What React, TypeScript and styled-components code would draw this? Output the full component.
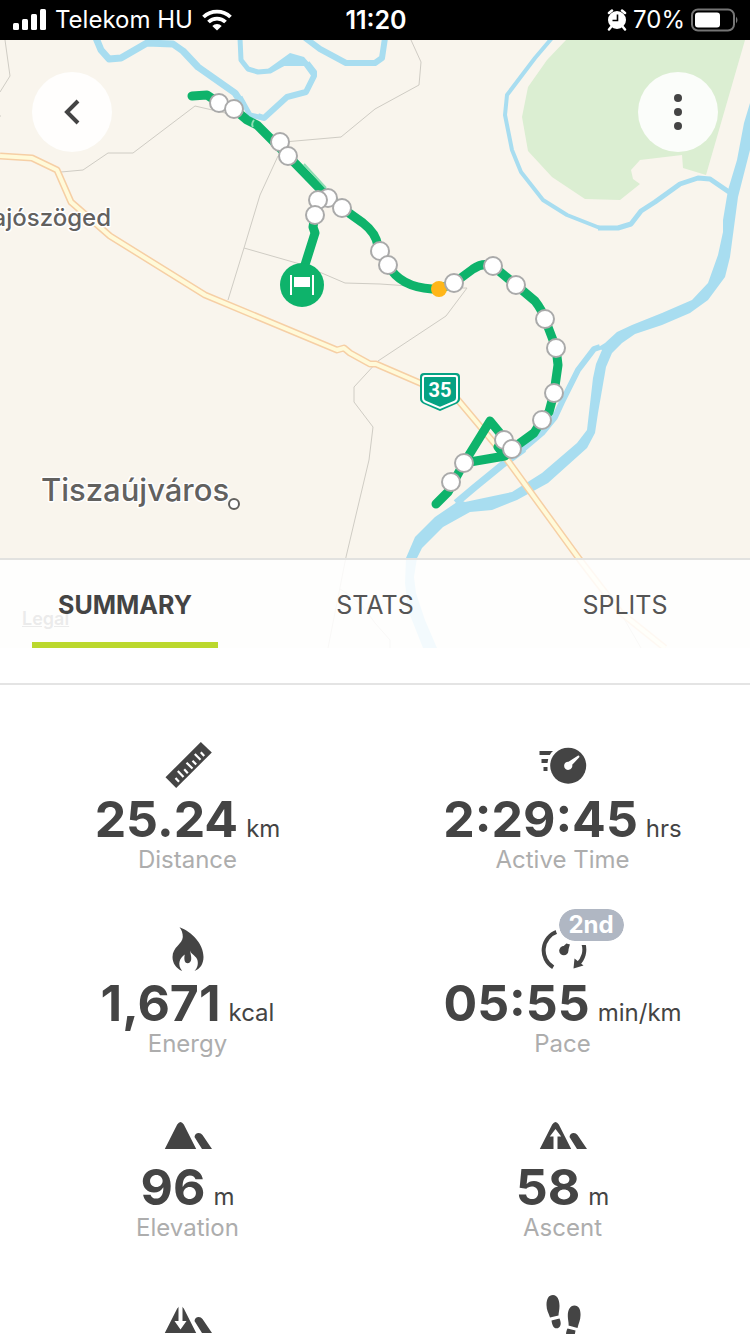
import React from "react";
import styled, { createGlobalStyle } from "styled-components";

const INK = "#444444";
const FONT = 'Inter, "Liberation Sans", sans-serif';

const GlobalStyle = createGlobalStyle`
  * { box-sizing: border-box; }
  body { margin: 0; background: #ffffff; color: ${INK}; font-family: ${FONT}; }
  button { font: inherit; color: inherit; border: 0; background: none; padding: 0; cursor: pointer; }
`;

const Screen = styled.div`
  display: flex;
  flex-direction: column;
  height: 100vh;
  overflow: hidden;
`;

const StatusBar = styled.header`
  flex: none;
  display: grid;
  grid-template-columns: 1fr auto 1fr;
  align-items: center;
  height: 40px;
  padding: 0 11px 0 13px;
  background: #000000;
  color: #ffffff;
  font-size: 24px;
  line-height: 40px;
`;

const StatusGroup = styled.div<{ $end?: boolean; $gap: number }>`
  display: flex;
  align-items: center;
  justify-content: ${(p) => (p.$end ? "flex-end" : "flex-start")};
  gap: ${(p) => p.$gap}px;
`;

const Clock = styled.time`
  font-size: 25px;
  font-weight: 600;
`;

const StatusIcon = styled.svg`
  display: block;
  flex: none;
`;

const MapPanel = styled.section`
  position: relative;
  flex: none;
  height: 608px;
  background: #f9f5ed;
`;

const MapCanvas = styled.svg`
  display: block;
  width: 100%;
  height: 100%;
`;

const RoundButton = styled.button<{ $side: "left" | "right" }>`
  position: absolute;
  top: 32px;
  ${(p) => p.$side}: 32px;
  display: grid;
  place-items: center;
  width: 80px;
  height: 80px;
  border-radius: 50%;
  background: rgba(255, 255, 255, 0.88);
`;

const LegalLink = styled.a`
  position: absolute;
  left: 22px;
  bottom: 18px;
  color: #6f6f6f;
  font-size: 18px;
  font-weight: 600;
  line-height: 22px;
`;

const TabBar = styled.nav`
  position: absolute;
  left: 0;
  right: 0;
  bottom: 0;
  display: grid;
  grid-template-columns: repeat(3, 1fr);
  height: 90px;
  border-top: 2px solid #e2e2e0;
  background: rgba(255, 255, 255, 0.86);
`;

const Tab = styled.button<{ $active?: boolean }>`
  margin: 0 32px;
  padding-top: 8px;
  border-bottom: 6px solid ${(p) => (p.$active ? "#bbd82d" : "transparent")};
  color: ${(p) => (p.$active ? INK : "#555555")};
  font-size: 25px;
  font-weight: ${(p) => (p.$active ? 700 : 400)};
  line-height: 28px;
`;

const Stats = styled.main`
  display: grid;
  grid-template-columns: 1fr 1fr;
  row-gap: 54px;
  margin-top: 35px;
  padding-top: 57px;
  border-top: 2px solid #e4e4e4;
`;

const Stat = styled.article`
  display: flex;
  flex-direction: column;
  align-items: center;
`;

const IconBox = styled.div`
  position: relative;
  width: 48px;
  height: 48px;
`;

const Glyph = styled.svg`
  display: block;
  width: 48px;
  height: 48px;
  fill: ${INK};
`;

const Badge = styled.span`
  position: absolute;
  top: -21px;
  left: 16px;
  padding: 0 10px;
  border: 4px solid #ffffff;
  border-radius: 20px;
  background: #b0b7c3;
  background-clip: padding-box;
  color: #ffffff;
  font-size: 24px;
  font-weight: 700;
  line-height: 32px;
`;

const Reading = styled.div`
  display: flex;
  align-items: baseline;
  gap: 8px;
`;

const Value = styled.strong`
  font-size: 50px;
  font-weight: 700;
  line-height: 58px;
`;

const Unit = styled.span`
  font-size: 24px;
  line-height: 24px;
`;

const Label = styled.div`
  color: #adadad;
  font-size: 24px;
  line-height: 24px;
`;

const minorRoads = [
  "M5 40L10 76L0 92",
  "M0 116h1",
  "M61 172L83 170L108 153H133L195 106L234 115",
  "M284 142L341 137L375 109L419 85L421 62L411 40",
  "M278 156L260 195L244 248L228 300",
  "M244 248L300 264L324 274L345 283L380 284L439 288L467 288L446 316L378 361L354 387V402L373 427L369 460L346 557L328 648",
  "M340 589Q360 600 375 623L390 640V648",
  "M623 617L641 648",
];

const highway =
  "M0 156L32 158L57 170L71 202L110 236L205 295L337 350L344 348L350 353L370 364L376 364L420 383L458 400L500 450L580 560L620 612L665 648";

const track = [
  "M192 96L207 95L219 103L234 109L247 120L257 125L280 148L288 156L325 194L342 208L363 223Q376 233 378 246L388 265Q400 287 432 289L439 289L454 283L473 269Q483 262 493 266L516 285L535 301Q542 310 545 319L556 348L558 365L554 393L549 412L542 420L534 433L512 449",
  "M328 198L318 200L315 215L313 227L315 233L304 268",
  "M436 504L448 492L464 463L490 421L504 438L498 447L505 456L464 463",
];

const waypoints: [number, number][] = [
  [219, 103], [234, 109], [280, 142], [288, 156], [328, 198], [318, 200], [315, 215],
  [342, 208], [380, 251], [388, 265], [454, 283], [493, 266], [516, 285], [545, 319],
  [556, 348], [554, 393], [542, 420], [504, 440], [512, 449], [464, 463], [451, 482],
];

function RouteMap() {
  return (
    <MapCanvas viewBox="0 40 750 608" preserveAspectRatio="xMidYMid slice" role="img" aria-label="Route map">
      <path
        fill="#dbeed2"
        d="M566 40L547 60L528 87L522 117L528 151L552 177L585 199L620 200L640 184L633 179L631 170L640 160L682 155L683 168L706 175L745 40Z"
      />
      <g fill="none" stroke="#a8ddf0" strokeLinejoin="round">
        <path strokeWidth="7" d="M96 38L101 50L109 59L121 58L147 43L173 44L183 51L198 67L235 93L243 105" />
        <path strokeWidth="5" d="M240 97L250 115L263 118" />
        <path strokeWidth="6" d="M258 116L264 118L287 97L306 92L314 76V72L307 63" />
        <path strokeWidth="5" d="M240 38L241 60L248 69L258 72L270 71L286 62" />
        <path strokeWidth="6" d="M304 37L320 49L346 63L375 63L382 58L385 38" />
        <path strokeWidth="4" d="M552 38L535 58L507 95L505 115L512 150L521 172L543 200L567 215L600 228L618 228" />
        <path strokeWidth="5" d="M598 228L618 228L631 224L641 211L655 202L680 184L698 178L710 179L729 192" />
        <path strokeWidth="6" d="M600 347L594 349L578 370L562 402L555 417L542 433L522 450" />
        <path strokeWidth="7" d="M524 449L502 465L475 487L456 503" />
      </g>
      <path
        fill="#a8ddf0"
        d="M265 71L290 53L304 57L317 72L312 77L304 66L284 66ZM750 103L744 123L737 160L728 190L723 220V232L718 255L708 283L692 300L662 313L632 325L617 332L605 343L597 348L602 350L596 364L593 378L587 430L577 443L542 473L512 492L465 502L460 500L435 517L415 537L406 558L405 583L408 610L423 648H437L425 620L416 593L414 577L417 558L422 548L443 527L470 512L492 510L517 500L548 483L587 448L595 433L598 413L606 367L612 353L622 343L635 334L662 325L690 313L708 300L725 277L730 257L738 197L750 150Z"
      />
      <g fill="none" stroke="#cfccc4" strokeWidth="1">
        {minorRoads.map((d) => (
          <path key={d} d={d} />
        ))}
      </g>
      <g fill="none" strokeLinejoin="round">
        <path d={highway} stroke="#f6cfa5" strokeWidth="7" />
        <path d={highway} stroke="#fffad9" strokeWidth="4" />
      </g>
      <g fill="none" stroke="#0eb36b" strokeWidth="9" strokeLinecap="round" strokeLinejoin="round">
        {track.map((d) => (
          <path key={d} d={d} />
        ))}
      </g>
      <path d="M253 127Q251 124 254 120M304 164L326 188" fill="none" stroke="#8fdcb4" strokeWidth="2" />
      <circle cx="439" cy="289" r="8" fill="#ffb619" />
      <g fill="#ffffff" stroke="#aaaaaa" strokeWidth="2">
        {waypoints.map(([x, y]) => (
          <circle key={`${x}-${y}`} cx={x} cy={y} r="9" />
        ))}
      </g>
      <circle cx="302" cy="285" r="22" fill="#0eb36b" />
      <path fill="#ffffff" d="M290 275h2v20h-2ZM312 275h2v20h-2ZM294 277h16v10h-16Z" />
      <path
        fill="#05a283"
        d="M424 373H456Q460 373 460 377V399Q460 402 456 404L440 411L424 404Q420 402 420 399V377Q420 373 424 373Z"
      />
      <path
        fill="none"
        stroke="#ffffff"
        strokeWidth="2"
        d="M425 376H455Q457 376 457 378V398Q457 401 454 402L440 408L426 402Q423 401 423 398V378Q423 376 425 376Z"
      />
      <text x="440" y="397" textAnchor="middle" fill="#ffffff" fontFamily="Roboto, sans-serif" fontSize="20" fontWeight="700">
        35
      </text>
      <g
        fill="#62615f"
        stroke="#ffffff"
        strokeWidth="3"
        strokeLinejoin="round"
        paintOrder="stroke"
        fontFamily={FONT}
        fontWeight="500"
      >
        <text x="111" y="226" textAnchor="end" fontSize="24">ajószöged</text>
        <text x="41" y="501" fontSize="31">Tiszaújváros</text>
      </g>
      <circle cx="234" cy="504" r="5" fill="#ffffff" stroke="#62615f" strokeWidth="2" />
    </MapCanvas>
  );
}

const smallPeak = "M30.5 27Q31 23 34.8 23Q37 23 38.5 25L48 39H38Z";
const bigPeak = "M.8 39L13.2 14.5Q16.5 9.500 19.800 14.5L32.2 39Z";

const icons: Record<string, React.ReactNode> = {
  ruler: (
    <>
      <path d="M36.800 0L47.800 10.500L12.200 46L1.500 35.300Z" />
      <path
        fill="none"
        stroke="#ffffff"
        strokeWidth="2.200"
        d="M11.500 36L15 39.700M13.800 29L19.500 35M20.200 27.300L23.800 31.200M22.500 20.700L28.500 26.500M28.500 18.700L32.200 22.500M30.800 12L36.500 17.800M36.800 10.300L40.200 14"
      />
    </>
  ),
  speed: (
    <>
      <path d="M.5 9H14Q12 10.500 10.800 13H.5ZM2.500 17H9.200L8.500 21H2.500ZM4.500 25H8.500V29H4.500Z" />
      <circle cx="29.200" cy="23.700" r="18" />
      <path
        fill="#ffffff"
        d="M39.200 13.500Q40.800 13.500 40.300 15.300L33.200 22.800A4.100 4.100 0 1 1 29.500 19.700Z"
      />
    </>
  ),
  flame: (
    <path d="M15.500 1.300C28 6 39.500 18 39.500 31C39.500 38 36 43 30.500 45C33.500 42 34.800 37 33 33C31 29 26 28 25.800 23.300C26 27 30 36 24 37.300C20 37.500 20 32 20.800 28.500C15.500 32 13 38.500 18.200 45C12 42.500 8.500 37 8.500 31C8.500 21 18.500 18 18.800 11C18.900 7 17.500 4 15.500 1.300Z" />
  ),
  pace: (
    <>
      <path
        fill="none"
        stroke={INK}
        strokeWidth="4"
        d="M18.200 5.700A19.700 19.700 0 0 0 14.200 41.300M44.200 17A19.700 19.700 0 0 1 38.500 38.500"
      />
      <path d="M35.500 32.500L34.500 42.500L44.500 39.500Z" />
      <circle cx="24.800" cy="24.700" r="4.600" />
      <path d="M23 21.500L28 17L31 18L28.500 27Z" />
    </>
  ),
  elevation: <path d={bigPeak + smallPeak} />,
  ascent: (
    <>
      <path d={bigPeak + smallPeak} />
      <path fill="#ffffff" d="M16.500 19L22.200 26.500H18.500V39H14.500V26.500H10.800Z" />
    </>
  ),
  descent: (
    <>
      <path d={bigPeak + smallPeak} />
      <path fill="#ffffff" d="M16.500 35.500L22.500 27H18.500V11H14.500V27H10.500Z" />
    </>
  ),
  steps: (
    <path d="M14 1C18.500 1 20.500 6 20.500 12C20.500 16 19.500 19 19.500 21.500L11 23.500C9.500 19 7.500 16 7.500 11C7.500 5 9.500 1 14 1ZM12.500 26.500L20.500 24.500C21.500 27 22 29 21.500 31C20.500 35 15.500 35.500 14 32C13 30 12.800 28.500 12.500 26.500ZM35.500 11.500C40 11.500 41.800 16 41.500 21.500C41.500 26 39.500 29.500 38.500 34L29.500 31.500C30 29 28.800 26 28.800 22C28.800 16 31 11.500 35.500 11.500ZM28.500 34.500L36.500 36.500C36 41 34.500 45 31 44.500C26 44 26.500 38.500 28.500 34.500Z" />
  ),
};

interface StatData {
  icon: string;
  value?: string;
  unit?: string;
  label?: string;
  badge?: string;
}

const stats: StatData[] = [
  { icon: "ruler", value: "25.24", unit: "km", label: "Distance" },
  { icon: "speed", value: "2:29:45", unit: "hrs", label: "Active Time" },
  { icon: "flame", value: "1,671", unit: "kcal", label: "Energy" },
  { icon: "pace", value: "05:55", unit: "min/km", label: "Pace", badge: "2nd" },
  { icon: "elevation", value: "96", unit: "m", label: "Elevation" },
  { icon: "ascent", value: "58", unit: "m", label: "Ascent" },
  { icon: "descent" },
  { icon: "steps" },
];

export default function App() {
  return (
    <Screen>
      <GlobalStyle />
      <StatusBar>
        <StatusGroup $gap={9}>
          <StatusIcon width="33" height="22" viewBox="0 0 33 22" fill="#ffffff">
            <rect x="0" y="14" width="6" height="7" rx="1.500" />
            <rect x="9" y="10" width="6" height="11" rx="1.500" />
            <rect x="18" y="5" width="6" height="16" rx="1.500" />
            <rect x="27" y="0" width="6" height="21" rx="1.500" />
          </StatusIcon>
          <span>Telekom HU</span>
          <StatusIcon width="30" height="22" viewBox="0 0 30 22" fill="none" stroke="#ffffff" strokeWidth="3.800">
            <path d="M1.500 8A19.500 19.500 0 0 1 28.500 8" />
            <path d="M6.500 13A12.200 12.200 0 0 1 23.500 13" />
            <path d="M15 21.500L10.300 17A6.800 6.800 0 0 1 19.700 17Z" fill="#ffffff" stroke="none" />
          </StatusIcon>
        </StatusGroup>
        <Clock>11:20</Clock>
        <StatusGroup $end $gap={6}>
          <StatusIcon width="20" height="22" viewBox="0 0 20 22">
            <path d="M2 4L5 1.500M15 1.500L18 4M4 18L2 20.500M16 18L18 20.500" stroke="#ffffff" strokeWidth="2.500" strokeLinecap="round" />
            <circle cx="10" cy="11" r="9" fill="#ffffff" />
            <path d="M10.500 5.500V11.500H5.500" fill="none" stroke="#000000" strokeWidth="1.600" />
          </StatusIcon>
          <span>70%</span>
          <StatusIcon width="48" height="24" viewBox="0 0 48 24">
            <rect x="1" y="1.500" width="42" height="21" rx="6" fill="none" stroke="#757575" strokeWidth="2" />
            <rect x="4" y="4.500" width="25" height="15" rx="3" fill="#ffffff" />
            <path d="M45 8.500Q48 12 45 15.500Z" fill="#757575" />
          </StatusIcon>
        </StatusGroup>
      </StatusBar>

      <MapPanel>
        <RouteMap />
        <LegalLink href="#legal">Legal</LegalLink>
        <RoundButton $side="left" aria-label="Back">
          <svg width="24" height="26" viewBox="0 0 24 26" fill="none" stroke={INK} strokeWidth="4">
            <path d="M18 2L7 13L18 24" />
          </svg>
        </RoundButton>
        <RoundButton $side="right" aria-label="More options">
          <svg width="8" height="36" viewBox="0 0 8 36" fill={INK}>
            <circle cx="4" cy="4" r="4" />
            <circle cx="4" cy="18" r="4" />
            <circle cx="4" cy="32" r="4" />
          </svg>
        </RoundButton>
        <TabBar role="tablist">
          <Tab role="tab" aria-selected $active>SUMMARY</Tab>
          <Tab role="tab">STATS</Tab>
          <Tab role="tab">SPLITS</Tab>
        </TabBar>
      </MapPanel>

      <Stats>
        {stats.map((s) => (
          <Stat key={s.icon}>
            <IconBox>
              <Glyph viewBox="0 0 48 48" aria-hidden="true">{icons[s.icon]}</Glyph>
              {s.badge && <Badge>{s.badge}</Badge>}
            </IconBox>
            {s.value && (
              <Reading>
                <Value>{s.value}</Value>
                <Unit>{s.unit}</Unit>
              </Reading>
            )}
            {s.label && <Label>{s.label}</Label>}
          </Stat>
        ))}
      </Stats>
    </Screen>
  );
}
